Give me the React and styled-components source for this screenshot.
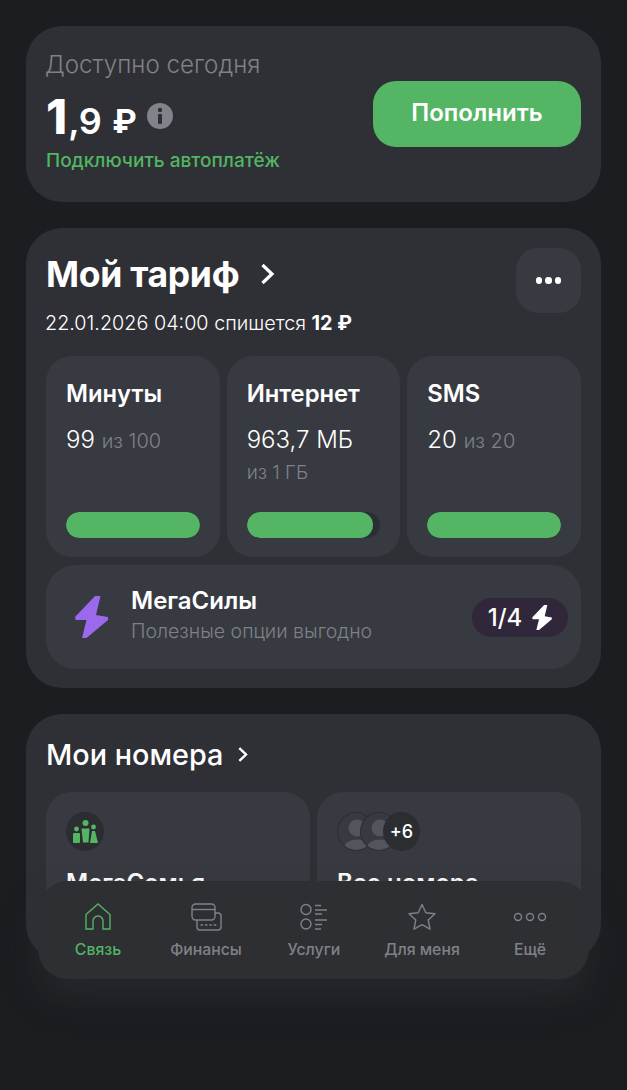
import React from "react";
import styled, { createGlobalStyle } from "styled-components";

const Global = createGlobalStyle`
  html, body { margin: 0; padding: 0; background: #1c1d21; }
  * { box-sizing: border-box; }
`;
const Page = styled.div`
  position: relative;
  width: 627px;
  height: 1090px;
  overflow: hidden;
  background: #1c1d21;
  padding: 26px 26px 0;
  display: flex;
  flex-direction: column;
  gap: 26px;
  font-family: Inter, "Noto Sans", sans-serif;
  color: #fff;
`;
const Card = styled.section`
  background: #2f3035;
  border-radius: 36px;
  padding: 20px;
  flex: none;
`;
const BalanceCard = styled(Card)`
  height: 176px;
  display: flex;
  align-items: flex-start;
  justify-content: space-between;
`;
const BalanceInfo = styled.div`
  display: flex;
  flex-direction: column;
`;
const Muted = styled.div`
  color: #7f8188;
  font-size: 24.2px;
  font-weight: 300;
  line-height: 38px;
  margin-left: -1px;
`;
const Amount = styled.div`
  display: flex;
  align-items: center;
  height: 58px;
  margin-top: 4px;
  font-weight: 700;
`;
const Whole = styled.span`
  font-size: 48px;
  font-weight: 800;
  line-height: 1;
`;
const Fraction = styled.span`
  font-size: 36px;
  font-weight: 600;
  margin: 7px 0 0 1px;
  letter-spacing: -.5px;
`;
const Currency = styled.span`
  font-size: 33px;
  font-weight: 700;
  margin: 7px 10px 0 11px;
`;
const InfoWrap = styled.span`
  display: flex;
  margin-top: -3px;
`;
const AutoLink = styled.div`
  color: #52b562;
  font-size: 19px;
  font-weight: 500;
  margin-top: 2px;
  line-height: 26px;
`;
const TopUp = styled.button`
  margin-top: 35px;
  width: 208px;
  height: 66px;
  border: 0;
  border-radius: 23px;
  background: #54b664;
  color: #fff;
  padding: 0 0 4px;
  font: 600 24px Inter, sans-serif;
`;
const TariffCard = styled(Card)`
  height: 460px;
`;
const TariffHead = styled.div`
  display: flex;
  justify-content: space-between;
  align-items: flex-start;
  height: 65px;
`;
const HeadLink = styled.div`
  display: flex;
  align-items: center;
  height: 52px;
  gap: 16px;
  font-size: 35.5px;
  font-weight: 700;
  letter-spacing: -.3px;
`;
const MoreButton = styled.div`
  width: 65px;
  height: 65px;
  border-radius: 22px;
  background: #383a41;
  display: flex;
  align-items: center;
  justify-content: center;
  gap: 3px;
`;
const Dot = styled.i`
  width: 6.5px;
  height: 6.5px;
  border-radius: 50%;
  background: #fff;
`;
const Charge = styled.div`
  font-size: 19.8px;
  font-weight: 300;
  line-height: 26px;
  margin-top: -3px;
  margin-left: -1px;
  b { font-weight: 700; }
`;
const Tiles = styled.div`
  display: grid;
  grid-template-columns: repeat(3, 1fr);
  column-gap: 7px;
  margin-top: 20px;
`;
const Tile = styled.div`
  height: 201px;
  border-radius: 26px;
  background: #383a41;
  padding: 23px 20px 19px;
  display: flex;
  flex-direction: column;
`;
const TileTitle = styled.div`
  font-size: 23.8px;
  font-weight: 600;
  line-height: 30px;
`;
const TileValue = styled.div`
  font-size: 24px;
  font-weight: 300;
  line-height: 32px;
  margin-top: 15px;
  span { color: #7f8188; font-size: 20px; }
`;
const TileSub = styled.div`
  color: #7f8188;
  font-size: 19px;
  font-weight: 300;
  line-height: 26px;
  margin-top: 4px;
`;
const Track = styled.div`
  margin-top: auto;
  height: 26px;
  border-radius: 13px;
  background: #2d2e33;
  overflow: hidden;
`;
const Fill = styled.div`
  height: 100%;
  border-radius: 13px;
  background: #54b664;
`;
const PowerRow = styled.div`
  margin-top: 8px;
  height: 104px;
  border-radius: 30px;
  background: #383a41;
  padding: 0 13px 0 29px;
  display: flex;
  align-items: center;
`;
const PowerText = styled.div`
  margin-left: 23px;
  margin-top: -5px;
  flex: 1;
`;
const PowerTitle = styled.div`
  font-size: 24px;
  font-weight: 600;
  line-height: 30px;
`;
const PowerSub = styled.div`
  color: #7f8188;
  font-size: 19.5px;
  font-weight: 300;
  line-height: 26px;
  margin-top: 2px;
`;
const Pill = styled.div`
  width: 96px;
  height: 39px;
  border-radius: 20px;
  background: #30273a;
  display: flex;
  align-items: center;
  justify-content: center;
  gap: 10px;
  font-size: 24px;
  font-weight: 500;
`;
const NumbersCard = styled(Card)`
  height: 246px;
`;
const NumbersHead = styled.div`
  display: flex;
  align-items: center;
  gap: 11px;
  height: 40px;
  font-size: 28.8px;
  font-weight: 500;
`;
const NumberTiles = styled.div`
  display: grid;
  grid-template-columns: 264px 264px;
  column-gap: 7px;
  margin-top: 18px;
`;
const NumberTile = styled.div`
  height: 150px;
  border-radius: 26px;
  background: #383a41;
  padding: 20px;
`;
const NumberTitle = styled.div`
  font-size: 24px;
  font-weight: 600;
  line-height: 30px;
  margin-top: 17px;
`;
const FamilyBadge = styled.div`
  width: 38px;
  height: 39px;
  border-radius: 50%;
  background: #2b2d31;
  display: flex;
  align-items: center;
  justify-content: center;
`;
const Stack = styled.div`
  display: flex;
  height: 39px;
`;
const Avatar = styled.div`
  width: 38px;
  height: 39px;
  border-radius: 50%;
  background: #383a41;
  border: 1px solid #2c2e32;
  margin-right: -15px;
  overflow: hidden;
`;
const More = styled.div`
  width: 37px;
  height: 39px;
  border-radius: 50%;
  background: #2b2d31;
  display: flex;
  align-items: center;
  justify-content: center;
  font-size: 18px;
  font-weight: 500;
  position: relative;
`;
const Nav = styled.nav`
  position: absolute;
  left: 38px;
  top: 881px;
  width: 551px;
  height: 98px;
  border-radius: 30px;
  background: #2e2f33;
  box-shadow: 0 18px 30px 2px rgba(46, 47, 51, .5);
  display: grid;
  grid-template-columns: repeat(5, 108px);
  padding: 0 6px;
`;
const NavItem = styled.div`
  display: flex;
  flex-direction: column;
  align-items: center;
  padding-top: 21px;
  color: ${p => (p.$active ? "#52b562" : "#7f8188")};
`;
const NavIcon = styled.div`
  height: 30px;
  display: flex;
  align-items: center;
  justify-content: center;
`;
const NavLabel = styled.div`
  margin-top: 7px;
  font-size: 15.8px;
  font-weight: 500;
  line-height: 22px;
`;

const Chevron = ({ size = 24, width = 3 }) => (
  <svg width={size} height={size} viewBox="0 0 24 24" fill="none" stroke="#fff" strokeWidth={width}>
    <path d="M7.5 3 L17 12 L7.5 21" />
  </svg>
);
const Bolt = ({ w, h, color }) => (
  <svg width={w} height={h} viewBox="0 0 33 42" fill={color}>
    <path d="M20 0 H25.5 L21 19 L33 21 V24 L11.5 42 H7 L11.5 24 L0.8 24 L0 21 Z" />
  </svg>
);
const Info = () => (
  <svg width="26" height="26" viewBox="0 0 26 26">
    <circle cx="13" cy="13" r="13" fill="#81838b" />
    <circle cx="13" cy="7" r="2.2" fill="#2f3035" />
    <rect x="11" y="11" width="4" height="10" rx="1" fill="#2f3035" />
  </svg>
);
const Family = () => (
  <svg width="26" height="26" viewBox="0 0 26 26" fill="#54b664">
    <circle cx="13.5" cy="4" r="3" />
    <circle cx="4.5" cy="10" r="2.4" />
    <circle cx="21.5" cy="8" r="2.4" />
    <rect x="1" y="14" width="7" height="10" rx="1" />
    <path d="M9.5 9.5 h8 l-1 14 h-5.5 z" />
    <path d="M20 12 h3 l3 12 h-8 z" />
  </svg>
);
const Person = () => (
  <svg width="38" height="39" viewBox="0 0 38 39" fill="#53555d">
    <circle cx="19" cy="15" r="8.5" />
    <ellipse cx="19" cy="35" rx="13" ry="8.5" />
  </svg>
);
const stroke = { fill: "none", stroke: "currentColor", strokeWidth: 1.4 };
const Home = () => (
  <svg width="26" height="28" viewBox="0 0 26 28" {...stroke}>
    <path d="M1 11.5 L13 1 L25 11.5 V26 H18 V18 A5 5 0 0 0 8 18 V26 H1 Z" />
  </svg>
);
const Cards = () => (
  <svg width="31" height="28" viewBox="0 0 31 28" {...stroke}>
    <rect x="1" y="1" width="23" height="16" rx="3.5" />
    <path d="M1 6.5 H24" />
    <path d="M6 17 V24 A3 3 0 0 0 9 27 H27 A3 3 0 0 0 30 24 V13 A3 3 0 0 0 27 10 H24" />
    <path d="M9.5 22 H27" strokeDasharray="2.6 1.8" />
  </svg>
);
const Services = () => (
  <svg width="28" height="28" viewBox="0 0 28 28" {...stroke}>
    <circle cx="6" cy="6.5" r="5" />
    <circle cx="6" cy="21" r="5" />
    <path d="M15 2.5 H21 M15 7 H27 M15 11 H22 M15 17 H27 M15 21.5 H22 M15 26 H21" />
  </svg>
);
const Star = () => (
  <svg width="28" height="28" viewBox="0 0 28 28" {...stroke}>
    <path d="M14 1.5 L17.8 9.8 L27 10.8 L20.2 17 L22 26.2 L14 21.7 L6 26.2 L7.8 17 L1 10.8 L10.2 9.8 Z" strokeLinejoin="round" />
  </svg>
);
const Rings = () => (
  <svg width="34" height="10" viewBox="0 0 34 10" {...stroke}>
    <circle cx="5" cy="5" r="3.5" />
    <circle cx="17" cy="5" r="3.5" />
    <circle cx="29" cy="5" r="3.5" />
  </svg>
);

const navItems = [
  { label: "Связь", icon: <Home />, active: true },
  { label: "Финансы", icon: <Cards /> },
  { label: "Услуги", icon: <Services /> },
  { label: "Для меня", icon: <Star /> },
  { label: "Ещё", icon: <Rings /> },
];

export default function App() {
  return (
    <Page>
      <Global />
      <BalanceCard>
        <BalanceInfo>
          <Muted>Доступно сегодня</Muted>
          <Amount>
            <Whole>1</Whole>
            <Fraction>,9</Fraction>
            <Currency>₽</Currency>
            <InfoWrap><Info /></InfoWrap>
          </Amount>
          <AutoLink>Подключить автоплатёж</AutoLink>
        </BalanceInfo>
        <TopUp>Пополнить</TopUp>
      </BalanceCard>

      <TariffCard>
        <TariffHead>
          <HeadLink>Мой тариф <Chevron size={24} width={3.2} /></HeadLink>
          <MoreButton><Dot /><Dot /><Dot /></MoreButton>
        </TariffHead>
        <Charge>22.01.2026 04:00 спишется <b>12 ₽</b></Charge>
        <Tiles>
          <Tile>
            <TileTitle>Минуты</TileTitle>
            <TileValue>99 <span>из 100</span></TileValue>
            <Track><Fill style={{ width: "100%" }} /></Track>
          </Tile>
          <Tile>
            <TileTitle>Интернет</TileTitle>
            <TileValue>963,7 МБ</TileValue>
            <TileSub>из 1 ГБ</TileSub>
            <Track><Fill style={{ width: "94.5%" }} /></Track>
          </Tile>
          <Tile>
            <TileTitle>SMS</TileTitle>
            <TileValue>20 <span>из 20</span></TileValue>
            <Track><Fill style={{ width: "100%" }} /></Track>
          </Tile>
        </Tiles>
        <PowerRow>
          <Bolt w={33} h={42} color="#9b68ee" />
          <PowerText>
            <PowerTitle>МегаСилы</PowerTitle>
            <PowerSub>Полезные опции выгодно</PowerSub>
          </PowerText>
          <Pill>1/4 <Bolt w={20} h={25} color="#fff" /></Pill>
        </PowerRow>
      </TariffCard>

      <NumbersCard>
        <NumbersHead>Мои номера <Chevron size={17} width={3.4} /></NumbersHead>
        <NumberTiles>
          <NumberTile>
            <FamilyBadge><Family /></FamilyBadge>
            <NumberTitle>МегаСемья</NumberTitle>
          </NumberTile>
          <NumberTile>
            <Stack>
              <Avatar><Person /></Avatar>
              <Avatar><Person /></Avatar>
              <More>+6</More>
            </Stack>
            <NumberTitle>Все номера</NumberTitle>
          </NumberTile>
        </NumberTiles>
      </NumbersCard>

      <Nav>
        {navItems.map(i => (
          <NavItem key={i.label} $active={i.active}>
            <NavIcon>{i.icon}</NavIcon>
            <NavLabel>{i.label}</NavLabel>
          </NavItem>
        ))}
      </Nav>
    </Page>
  );
}
